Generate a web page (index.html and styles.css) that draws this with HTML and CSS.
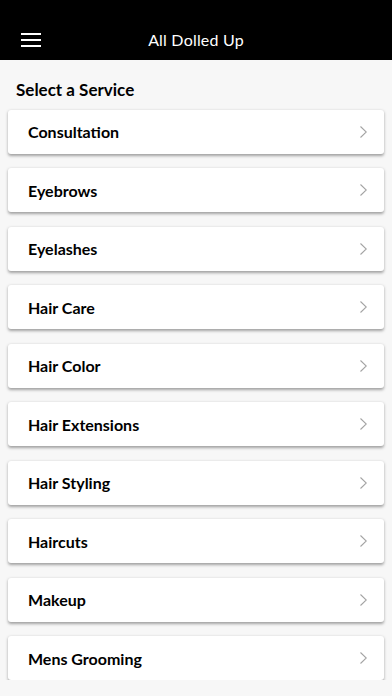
FILE: index.html
```html
<!DOCTYPE html>
<html lang="en">
<head>
    <meta charset="UTF-8">
    <meta name="viewport" content="width=device-width, initial-scale=1.0">
    <title>All Dolled Up</title>
    <link rel="stylesheet" href="styles.css">
</head>
<body>
    <header class="topbar">
        <button class="menu-btn" aria-label="Menu">
            <svg width="20" height="14" viewBox="0 0 20 14">
                <path d="M0 1H20M0 7H20M0 13H20" stroke="#fff" stroke-width="2"/>
            </svg>
        </button>
        <h1>All Dolled Up</h1>
    </header>

    <main class="services">
        <h2>Select a Service</h2>
        <ul class="service-list">
            <li class="service-item">Consultation</li>
            <li class="service-item">Eyebrows</li>
            <li class="service-item">Eyelashes</li>
            <li class="service-item">Hair Care</li>
            <li class="service-item">Hair Color</li>
            <li class="service-item">Hair Extensions</li>
            <li class="service-item">Hair Styling</li>
            <li class="service-item">Haircuts</li>
            <li class="service-item">Makeup</li>
            <li class="service-item">Mens Grooming</li>
        </ul>
    </main>
</body>
</html>
```

FILE: styles.css
```css
/* Basic page styling */
body {
    margin: 0;
    padding: 0;
    font-family: Lato, "Noto Sans", sans-serif;
    background-color: #f7f7f7;
    color: #000;
    overflow: hidden;
}

/* Top bar */
.topbar {
    position: relative;
    height: 60px;
    background-color: #000;
    display: flex;
    align-items: flex-end;
    justify-content: center;
    padding-bottom: 11px;
    box-sizing: border-box;
}

.topbar h1 {
    margin: 0;
    font-size: 16px;
    font-weight: 400;
    color: #fff;
    letter-spacing: 0.2px;
}

.menu-btn {
    position: absolute;
    left: 21px;
    top: 33px;
    padding: 0;
    border: none;
    background: none;
    line-height: 0;
}

/* Service list */
.services {
    padding: 0 8px;
}

.services h2 {
    margin: 0;
    padding: 19px 8px 10px;
    font-size: 17px;
    font-weight: 700;
    line-height: 21px;
}

.service-list {
    list-style: none;
    margin: 0;
    padding: 0;
    display: flex;
    flex-direction: column;
    gap: 14.8px;
}

.service-item {
    position: relative;
    height: 43.7px;
    padding: 0 20px;
    display: flex;
    align-items: center;
    background-color: #fff;
    border-radius: 3px;
    box-shadow: 0 1.5px 3px rgba(0, 0, 0, 0.35);
    font-size: 16px;
    font-weight: 700;
}

/* Thin chevron on the right of each row */
.service-item::after {
    content: "";
    position: absolute;
    right: 17px;
    top: 50%;
    width: 7px;
    height: 12px;
    margin-top: -6px;
    background: url("data:image/svg+xml;utf8,<svg xmlns='http://www.w3.org/2000/svg' width='7' height='12' viewBox='0 0 7 12'><path d='M0.5 0.5L6.3 6L0.5 11.5' fill='none' stroke='%23a3a3a3' stroke-width='1.1'/></svg>") no-repeat;
}
```
